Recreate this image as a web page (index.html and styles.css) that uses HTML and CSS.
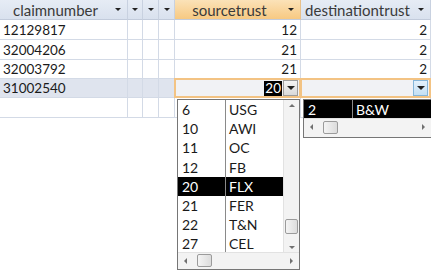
FILE: index.html
```html
<!DOCTYPE html>
<html lang="en">

<head>
    <meta charset="utf-8">
    <title>claims</title>
    <link rel="stylesheet" href="styles.css">
</head>

<body>
    <section class="ark">
        <div class="hd"><span class="tx">claimnumber</span><span class="pil"></span></div>
        <div class="hd smal"><span class="pil"></span></div>
        <div class="hd smal"><span class="pil"></span></div>
        <div class="hd smal"><span class="pil"></span></div>
        <div class="hd varm"><span class="tx">sourcetrust</span><span class="pil"></span></div>
        <div class="hd"><span class="tx">destinationtrust</span><span class="pil"></span></div>

        <div class="c">12129817</div><div class="c"></div><div class="c"></div><div class="c"></div>
        <div class="c tal">12</div><div class="c tal">2</div>

        <div class="c">32004206</div><div class="c"></div><div class="c"></div><div class="c"></div>
        <div class="c tal">21</div><div class="c tal">2</div>

        <div class="c">32003792</div><div class="c"></div><div class="c"></div><div class="c"></div>
        <div class="c tal">21</div><div class="c tal">2</div>

        <div class="c valgt">31002540</div><div class="c valgt"></div><div class="c valgt"></div><div class="c valgt"></div>
        <div class="c aktiv tal"><span class="mark">20</span><span class="knap"><span class="pil"></span></span></div>
        <div class="c aktiv tal"><span class="knap blaa"><span class="pil"></span></span></div>

        <div class="c"></div><div class="c"></div><div class="c"></div><div class="c"></div>
        <div class="c"></div><div class="c"></div>
    </section>

    <!-- rullelisten under sourcetrust -->
    <div class="liste kilde">
        <div class="rk"><span class="nr">6</span><span>USG</span></div>
        <div class="rk"><span class="nr">10</span><span>AWI</span></div>
        <div class="rk"><span class="nr">11</span><span>OC</span></div>
        <div class="rk"><span class="nr">12</span><span>FB</span></div>
        <div class="rk valgt"><span class="nr">20</span><span>FLX</span></div>
        <div class="rk"><span class="nr">21</span><span>FER</span></div>
        <div class="rk"><span class="nr">22</span><span>T&amp;N</span></div>
        <div class="rk"><span class="nr">27</span><span>CEL</span></div>
        <div class="vscroll">
            <span class="op"></span>
            <span class="greb"></span>
            <span class="ned"></span>
        </div>
        <div class="hscroll">
            <span class="ve"></span>
            <span class="greb"></span>
            <span class="hoj"></span>
        </div>
    </div>

    <!-- rullelisten under destinationtrust -->
    <div class="liste maal">
        <div class="rk valgt"><span class="nr">2</span><span>B&amp;W</span></div>
        <div class="hscroll">
            <span class="ve"></span>
            <span class="greb"></span>
            <span class="hoj"></span>
        </div>
    </div>
</body>

</html>
```

FILE: styles.css
```css
body {
    margin: 0;
    background: #fff;
    font-family: 'Lato', 'Liberation Sans', sans-serif;
    font-size: 13.5px;
    color: #1a1a1a;
}

.ark {
    display: grid;
    grid-template-columns: 128px 15px 16px 16px 126px 130px;
    grid-template-rows: 20px 20px 20px 19px 19px 20px;
    width: 431px;
}

.hd {
    display: flex;
    align-items: center;
    background: linear-gradient(#e6ecf5, #d9e1ee);
    border-right: 1px solid #c8d1e0;
    border-bottom: 1px solid #c2cbdb;
    color: #3a3a3a;
    font-size: 15px;
    box-sizing: border-box;
}

.hd .tx {
    flex: 1;
    text-align: center;
}

.hd .pil {
    margin: 0 6px 0 4px;
}

.hd.smal {
    justify-content: center;
}

.hd.smal .pil {
    margin: 0;
}

.hd.varm {
    background: linear-gradient(#fbe2b8, #f7c982);
    border-right-color: #e8c08a;
}

.pil {
    width: 0;
    height: 0;
    border-left: 3px solid transparent;
    border-right: 3px solid transparent;
    border-top: 3px solid #222;
}

.c {
    display: flex;
    align-items: center;
    padding: 0 3px;
    border-right: 1px solid #d3dae6;
    border-bottom: 1px solid #d3dae6;
    box-sizing: border-box;
    white-space: nowrap;
}

.tal {
    justify-content: flex-end;
}

.c.valgt {
    background: #dfe4ee;
}

.aktiv {
    position: relative;
    background: #f1f2f5;
    padding: 0 2px 0 0;
}

.aktiv::after {
    content: "";
    position: absolute;
    top: -1px;
    left: -1px;
    right: -1px;
    bottom: -1px;
    border: 2px solid #f3c383;
}

.mark {
    background: #000;
    color: #fff;
    padding: 0 1px;
    line-height: 15px;
}

.knap {
    display: flex;
    align-items: center;
    justify-content: center;
    width: 15px;
    height: 16px;
    margin-left: 1px;
    background: linear-gradient(#f4f4f4, #d9d9d9);
    border: 1px solid #9c9c9c;
    box-sizing: border-box;
}

.knap .pil {
    border-left-width: 4px;
    border-right-width: 4px;
    border-top-width: 4px;
}

.knap.blaa {
    background: linear-gradient(#e4f1fb, #c4e0f4);
    border-color: #85b6da;
}

.liste {
    position: absolute;
    top: 99px;
    background: #fff;
    border: 1px solid #767676;
    box-sizing: border-box;
    font-size: 14px;
}

.kilde {
    left: 177px;
    width: 123px;
    height: 171px;
    padding-right: 16px;
}

.maal {
    left: 303px;
    width: 129px;
    height: 39px;
}

.rk {
    display: flex;
    align-items: center;
    height: 19.2px;
    white-space: nowrap;
}

.rk .nr {
    width: 48px;
    height: 100%;
    display: flex;
    align-items: center;
    padding-left: 4px;
    box-sizing: border-box;
    border-right: 1px solid #8a8a8a;
    margin-right: 3px;
}

.maal .rk .nr {
    width: 49px;
}

.rk.valgt {
    background: #000;
    color: #fff;
}

.vscroll {
    position: absolute;
    top: 0;
    right: 0;
    width: 16px;
    height: 153px;
    background: #f3f3f3;
    border-left: 1px solid #e2e2e2;
    box-sizing: border-box;
}

.vscroll .greb {
    position: absolute;
    left: 1px;
    top: 119px;
    width: 13px;
    height: 15px;
}

.hscroll {
    position: absolute;
    left: 0;
    right: 0;
    bottom: 0;
    height: 17px;
    background: #f3f3f3;
    border-top: 1px solid #e2e2e2;
    box-sizing: border-box;
}

.hscroll .greb {
    position: absolute;
    top: 1px;
    left: 19px;
    width: 15px;
    height: 13px;
}

.maal .hscroll {
    height: 19px;
}

.maal .hscroll .greb {
    top: 2px;
    left: 19px;
}

.greb {
    background: linear-gradient(90deg, #f4f4f4, #dcdcdc);
    border: 1px solid #9b9b9b;
    border-radius: 2px;
    box-sizing: border-box;
}

.op, .ned, .ve, .hoj {
    position: absolute;
    width: 0;
    height: 0;
    border: 3px solid transparent;
}

.op {
    top: 4px;
    left: 5px;
    border-top: 0;
    border-bottom: 3px solid #707070;
}

.ned {
    bottom: 4px;
    left: 5px;
    border-bottom: 0;
    border-top: 3px solid #707070;
}

.ve {
    left: 6px;
    top: 5px;
    border-left: 0;
    border-right: 3px solid #707070;
}

.hoj {
    right: 6px;
    top: 5px;
    border-right: 0;
    border-left: 3px solid #707070;
}
```
